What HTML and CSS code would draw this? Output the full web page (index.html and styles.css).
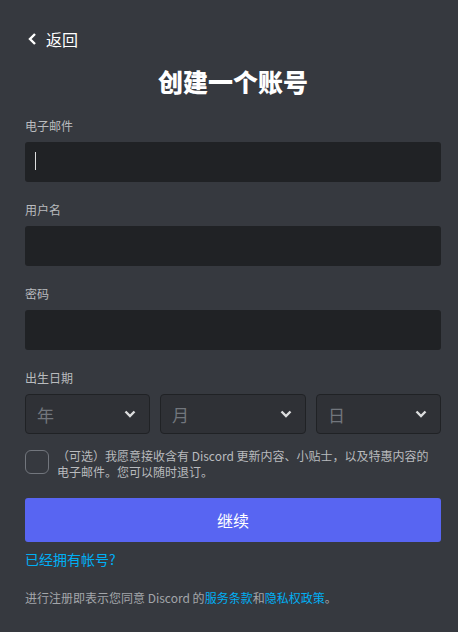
FILE: index.html
```html
<!DOCTYPE html>
<html lang="zh-CN">
<head>
  <meta charset="UTF-8">
  <meta name="viewport" content="width=device-width, initial-scale=1.0">
  <title>创建一个账号</title>
  <link rel="stylesheet" href="styles.css">
</head>
<body>
  <div class="register">
    <a href="#" class="back-link">
      <svg width="12" height="14" viewBox="0 0 12 14"><path d="M8 2 L3 7 L8 12" fill="none" stroke="#fff" stroke-width="2.4"/></svg>
      返回
    </a>
    <h1 class="title">创建一个账号</h1>

    <form>
      <div class="field">
        <label for="email">电子邮件</label>
        <div class="input-box"><input type="email" id="email"><span class="caret"></span></div>
      </div>
      <div class="field">
        <label for="username">用户名</label>
        <div class="input-box"><input type="text" id="username"></div>
      </div>
      <div class="field">
        <label for="password">密码</label>
        <div class="input-box"><input type="password" id="password"></div>
      </div>
      <div class="field">
        <label>出生日期</label>
        <div class="date-row">
          <div class="select">年<svg width="12" height="8" viewBox="0 0 12 8"><path d="M1.5 1.5 L6 6 L10.5 1.5" fill="none" stroke="#dcddde" stroke-width="2.4"/></svg></div>
          <div class="select">月<svg width="12" height="8" viewBox="0 0 12 8"><path d="M1.5 1.5 L6 6 L10.5 1.5" fill="none" stroke="#dcddde" stroke-width="2.4"/></svg></div>
          <div class="select">日<svg width="12" height="8" viewBox="0 0 12 8"><path d="M1.5 1.5 L6 6 L10.5 1.5" fill="none" stroke="#dcddde" stroke-width="2.4"/></svg></div>
        </div>
      </div>

      <div class="optin">
        <span class="checkbox"></span>
        <p>（可选）我愿意接收含有 Discord 更新内容、小贴士，以及特惠内容的<br>电子邮件。您可以随时退订。</p>
      </div>

      <button type="submit" class="continue-btn">继续</button>
    </form>

    <a href="#" class="login-link">已经拥有帐号?</a>
    <p class="terms">进行注册即表示您同意 Discord 的<a href="#">服务条款</a>和<a href="#">隐私权政策</a>。</p>
  </div>
</body>
</html>
```

FILE: styles.css
```css
body {
  margin: 0;
  background-color: #36393f;
  font-family: "Noto Sans CJK SC", "Noto Sans", sans-serif;
  color: #b9bbbe;
}

.register {
  padding: 28px 17px 0 25px;
}

.back-link {
  display: flex;
  align-items: center;
  gap: 7px;
  color: #fff;
  text-decoration: none;
  font-size: 16px;
  line-height: 22px;
  padding-left: 2px;
}

.title {
  margin: 15px 0 21px;
  text-align: center;
  color: #fff;
  font-size: 25px;
  line-height: 32px;
  font-weight: 900;
}

.field {
  margin-bottom: 20px;
}

.field label {
  display: block;
  font-size: 12px;
  line-height: 16px;
  margin-bottom: 8px;
  color: #b9bbbe;
}

.input-box {
  position: relative;
}

.input-box input {
  display: block;
  box-sizing: border-box;
  width: 100%;
  height: 40px;
  padding: 10px;
  border: none;
  border-radius: 3px;
  background-color: #202225;
  color: #dcddde;
  font-size: 16px;
  outline: none;
}

.caret {
  position: absolute;
  left: 10px;
  top: 10px;
  width: 1px;
  height: 18px;
  background-color: #dcddde;
}

.date-row {
  display: grid;
  grid-template-columns: 125px 1fr 125px;
  gap: 10px;
}

.select {
  box-sizing: border-box;
  height: 40px;
  display: flex;
  align-items: center;
  justify-content: space-between;
  padding: 0 13px 0 11px;
  background-color: #2f3136;
  border: 1px solid #202225;
  border-radius: 4px;
  color: #72767d;
  font-size: 17px;
}

.optin {
  display: flex;
  gap: 8px;
  margin-top: -6px;
}

.checkbox {
  flex: none;
  box-sizing: border-box;
  width: 24px;
  height: 24px;
  margin-top: 2px;
  border: 1px solid #72767d;
  border-radius: 6px;
}

.optin p {
  margin: 0;
  font-size: 12px;
  line-height: 16px;
  color: #b9bbbe;
}

.continue-btn {
  display: block;
  width: 100%;
  height: 44px;
  margin-top: 18px;
  border: none;
  border-radius: 3px;
  background-color: #5865f2;
  color: #fff;
  font-family: inherit;
  font-size: 16px;
  cursor: pointer;
}

.login-link {
  display: block;
  margin-top: 8px;
  font-size: 14px;
  line-height: 18px;
  color: #00aff4;
  text-decoration: none;
}

.terms {
  margin: 22px 0 0;
  font-size: 12px;
  line-height: 16px;
  color: #a3a6aa;
}

.terms a {
  color: #00aff4;
  text-decoration: none;
}
```
